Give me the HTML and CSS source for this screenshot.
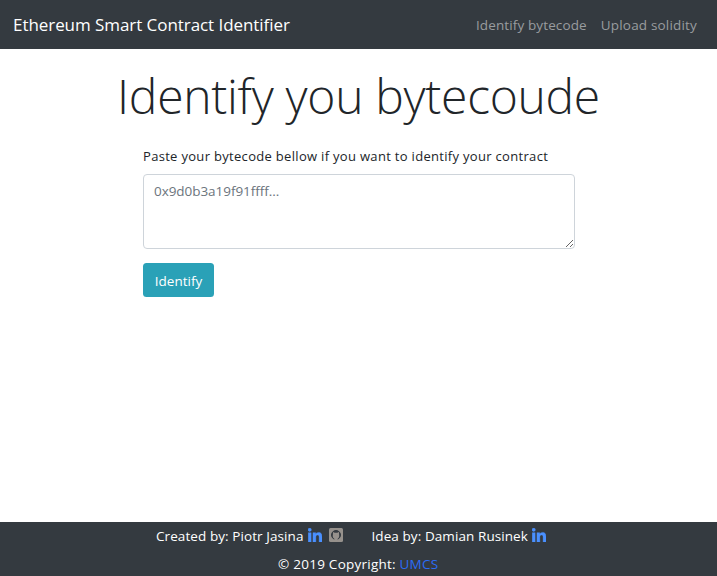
FILE: index.html
```html
<!DOCTYPE html>
<html lang="en">
<head>
<meta charset="utf-8">
<title>Ethereum Smart Contract Identifier</title>
<link rel="stylesheet" href="styles.css">
</head>
<body>
<svg class="sprite" aria-hidden="true">
  <symbol id="linkedin" viewBox="0 0 448 448"><path d="M100 448H7V149h93zM53 108C24 108 0 84 0 54a54 54 0 0 1 108 0c0 30-24 54-55 54zm395 340h-93V302c0-34-1-79-48-79-49 0-56 38-56 77v148h-93V149h89v41h1c13-24 43-48 88-48 94 0 112 62 112 142z"/></symbol>
  <symbol id="github" viewBox="0 0 14 14"><rect class="tile" width="14" height="14" rx="1.500"/><circle class="ring" cx="7" cy="7" r="4.500"/><path class="tile" d="M5.300 14v-3.300C3.900 10.100 3.500 8.400 3.900 6.500L4 4l1.700.8h2.600L10 4l.1 2.500c.4 1.900 0 3.600-1.400 4.200V14z"/></symbol>
</svg>
<nav class="navbar">
  <a class="brand">Ethereum Smart Contract Identifier</a>
  <div class="links"><a class="link-identify">Identify bytecode</a><a class="link-upload">Upload solidity</a></div>
</nav>
<main>
  <h1>Identify you bytecoude</h1>
  <form class="form">
    <label for="code">Paste your bytecode bellow if you want to identify your contract</label>
    <textarea id="code" placeholder="0x9d0b3a19f91ffff..."></textarea>
    <button type="button">Identify</button>
  </form>
</main>
<footer>
  <div class="credits">
    <div class="credit"><span class="creator">Created by: Piotr Jasina</span><svg class="icon linkedin"><use href="#linkedin"/></svg><svg class="icon github"><use href="#github"/></svg></div>
    <div class="credit"><span class="idea">Idea by: Damian Rusinek</span><svg class="icon linkedin"><use href="#linkedin"/></svg></div>
  </div>
  <div class="copyright"><span class="notice">© 2019 Copyright:</span><a class="umcs">UMCS</a></div>
</footer>
</body>
</html>
```
FILE: styles.css
```css
* { box-sizing: border-box; }
body { margin: 0; height: 576px; display: flex; flex-direction: column; font: 14px/21px "Open Sans", "Noto Sans", sans-serif; color: #212529; background: #fff; overflow: hidden; }
.sprite { position: absolute; width: 0; height: 0; }
.navbar { height: 49px; padding: 0 20px 0 13px; background: #343a40; display: flex; align-items: center; justify-content: space-between; white-space: nowrap; }
.brand { font-size: 17px; letter-spacing: -0.060px; color: #fff; }
.links { display: flex; gap: 14px; padding-top: 2px; font-size: 13.500px; letter-spacing: 0.120px; color: #999c9f; }
.link-upload { letter-spacing: 0.180px; }
main { flex: 1; }
h1 { margin: 17px 0 0; font-size: 48px; line-height: 60px; letter-spacing: -0.300px; font-weight: 300; text-align: center; white-space: nowrap; }
.form { width: 432px; margin: 20px auto 0 143px; display: flex; flex-direction: column; align-items: flex-start; }
label { font-size: 13px; line-height: 21px; letter-spacing: 0.310px; white-space: nowrap; }
textarea { width: 432px; height: 75px; margin: 7px 0 14px; padding: 6px 10px; border: 1px solid #ced4da; border-radius: 4px; font: 13.500px/21px "Open Sans", "Noto Sans", sans-serif; letter-spacing: -0.050px; resize: vertical; }
textarea::placeholder { color: #6c757d; }
button { width: 71px; height: 34px; padding: 2px 0 0; border: 0; border-radius: 3.500px; background: #2aa1b7; color: #fff; font: 13.500px/21px "Open Sans", "Noto Sans", sans-serif; }
footer { height: 54px; background: #343a40; color: #fff; font-size: 13.500px; padding-top: 4px; white-space: nowrap; }
.credits { display: flex; padding-left: 156px; gap: 28.500px; height: 21px; letter-spacing: 0.080px; }
.credit { display: flex; }
.icon { fill: #4a90ff; width: 14px; height: 14px; margin: 2px 0 0 4.500px; }
.linkedin { stroke: #4a90ff; stroke-width: 12px; }
.github { margin-left: 7px; }
.tile { fill: #96918c; stroke: none; }
.ring { fill: #343a40; stroke: #343a40; stroke-width: 1px; }
.copyright { display: flex; gap: 3.500px; padding: 7px 0 0 278px; letter-spacing: 0.250px; }
.umcs { color: #2b6cf6; }
```
